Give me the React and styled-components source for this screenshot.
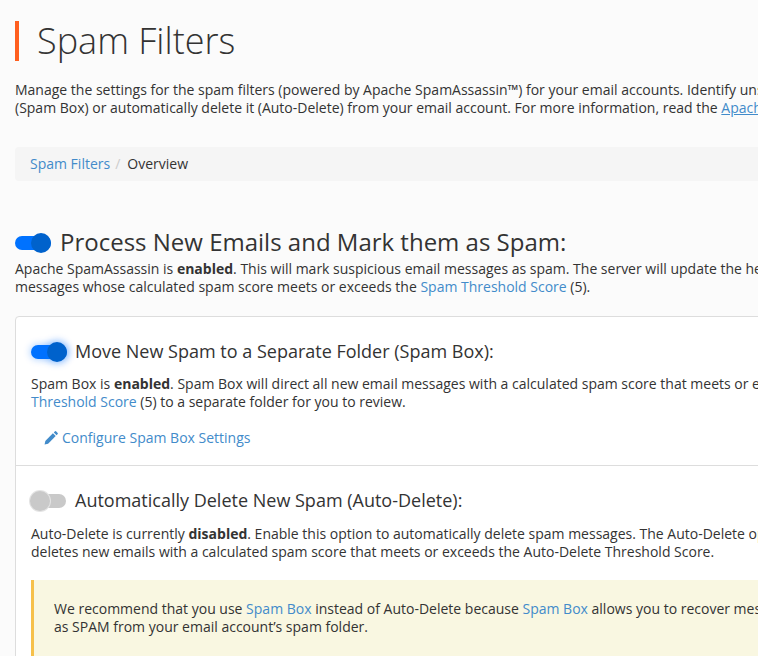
import React from "react";
import styled, { createGlobalStyle } from "styled-components";

const Global = createGlobalStyle`
  html, body { margin: 0; padding: 0; height: 100%; overflow: hidden; background: #fbfbfb; }
  body { font-family: "Open Sans", sans-serif; font-size: 14px; line-height: 18px; color: #333; }
`;

const Page = styled.div`
  width: 1100px;
  height: 656px;
  overflow: hidden;
  padding: 21px 15px 0;
  box-sizing: border-box;
`;
const Title = styled.h1`
  margin: 0;
  height: 40px;
  border-left: 4px solid #ff5f1f;
  padding-left: 18px;
  font-size: 36px;
  font-weight: 300;
  line-height: 40px;
  color: #333;
`;
const Intro = styled.p`
  margin: 20px 0 0;
  white-space: nowrap;
`;
const Crumbs = styled.nav`
  margin-top: 30px;
  height: 34px;
  display: flex;
  align-items: center;
  padding: 0 15px;
  background: #f5f5f5;
  border-radius: 4px;
`;
const Link = styled.a`
  color: #428bca;
  text-decoration: ${(p) => (p.$underline ? "underline" : "none")};
`;
const Sep = styled.span`
  color: #ccc;
  padding: 0 7px 0 5px;
`;
const Head = styled.div`
  display: flex;
  align-items: center;
  gap: ${(p) => p.$gap || 10}px;
`;
const MainHead = styled(Head)`
  margin-top: 45px;
  height: 34px;
`;
const H2 = styled.h2`
  margin: 0 0 0 -1px;
  padding-bottom: 2px;
  font-size: 24px;
  font-weight: 400;
  line-height: 32px;
`;
const H3 = styled.h3`
  margin: 0 0 0 ${(p) => p.$shift || 0}px;
  padding-bottom: 2px;
  font-size: 18px;
  font-weight: 400;
  line-height: 24px;
`;
const Text = styled.p`
  margin: ${(p) => p.$top || 0}px 0 0;
  white-space: nowrap;
`;
const Track = styled.span`
  position: relative;
  flex: none;
  display: block;
  width: ${(p) => (p.$on ? 36 : 35)}px;
  height: 14px;
  border-radius: 7px;
  background: ${(p) => (p.$on ? "#0072ff" : "#c9c9c9")};
  box-shadow: ${(p) => (p.$glow ? "0 0 7px 1px rgba(0,114,255,.3)" : "none")};
`;
const Knob = styled.span`
  position: absolute;
  top: -3px;
  left: ${(p) => (p.$on ? "16px" : "-1px")};
  width: 20px;
  height: 20px;
  border-radius: 50%;
  background: ${(p) => (p.$on ? "#0062cc" : "#c9c9c9")};
  box-shadow: ${(p) =>
    p.$glow ? "0 0 7px 2px rgba(0,114,255,.3)" : p.$on ? "none" : "0 0 0 1px #e4e4e4"};
`;
const Toggle = ({ on, glow }) => (
  <Track $on={on} $glow={glow}>
    <Knob $on={on} $glow={glow} />
  </Track>
);
const Card = styled.section`
  margin-top: 20px;
  border: 1px solid #ddd;
  border-radius: 4px;
  background: #fff;
`;
const Block = styled.div`
  padding: ${(p) => p.$top}px 15px ${(p) => p.$bottom}px;
  & + & { border-top: 1px solid #ddd; }
`;
const ConfigLink = styled(Link)`
  display: inline-flex;
  align-items: center;
  gap: 4px;
  margin: 18px 0 0 13px;
`;
const Alert = styled.div`
  margin-top: 19px;
  padding: 20px;
  height: 90px;
  box-sizing: border-box;
  border-left: 3px solid #f6c04a;
  background: #f9f7e1;
  white-space: nowrap;
`;
const Pencil = () => (
  <svg width="14" height="14" viewBox="0 0 14 14" fill="#428bca">
    <path d="M0.6 13.4 L1.3 9.9 L8.9 2.3 L11.7 5.1 L4.1 12.7 Z" />
    <path d="M9.8 1.4 L11 0.3 Q11.5 -0.1 12 0.3 L13.7 2 Q14.1 2.5 13.7 3 L12.6 4.2 Z" />
  </svg>
);

export default function App() {
  return (
    <>
      <Global />
      <Page>
        <Title>Spam Filters</Title>
        <Intro>
          Manage the settings for the spam filters (powered by Apache SpamAssassin™) for your email accounts. Identify unsolicited email and move it to a separate folder
          <br />
          (Spam Box) or automatically delete it (Auto-Delete) from your email account. For more information, read the <Link $underline>Apache SpamAssassin documentation</Link>.
        </Intro>
        <Crumbs>
          <Link>Spam Filters</Link>
          <Sep>/</Sep>
          <span>Overview</span>
        </Crumbs>
        <MainHead>
          <Toggle on />
          <H2>Process New Emails and Mark them as Spam:</H2>
        </MainHead>
        <Text>
          Apache SpamAssassin is <b>enabled</b>. This will mark suspicious email messages as spam. The server will update the headers of
          <br />
          messages whose calculated spam score meets or exceeds the <Link>Spam Threshold Score</Link> (5).
        </Text>
        <Card>
          <Block $top={22} $bottom={16}>
            <Head $gap={8}>
              <Toggle on glow />
              <H3>Move New Spam to a Separate Folder (Spam Box):</H3>
            </Head>
            <Text $top={10}>
              Spam Box is <b>enabled</b>. Spam Box will direct all new email messages with a calculated spam score that meets or exceeds the <Link>Spam</Link>
              <br />
              <Link>Threshold Score</Link> (5) to a separate folder for you to review.
            </Text>
            <ConfigLink>
              <Pencil />
              Configure Spam Box Settings
            </ConfigLink>
          </Block>
          <Block $top={22} $bottom={0}>
            <Head $gap={8}>
              <Toggle />
              <H3 $shift={1}>Automatically Delete New Spam (Auto-Delete):</H3>
            </Head>
            <Text $top={11}>
              Auto-Delete is currently <b>disabled</b>. Enable this option to automatically delete spam messages. The Auto-Delete option permanently
              <br />
              deletes new emails with a calculated spam score that meets or exceeds the Auto-Delete Threshold Score.
            </Text>
            <Alert>
              We recommend that you use <Link>Spam Box</Link> instead of Auto-Delete because <Link>Spam Box</Link> allows you to recover messages incorrectly marked
              <br />
              as SPAM from your email account’s spam folder.
            </Alert>
          </Block>
        </Card>
      </Page>
    </>
  );
}
